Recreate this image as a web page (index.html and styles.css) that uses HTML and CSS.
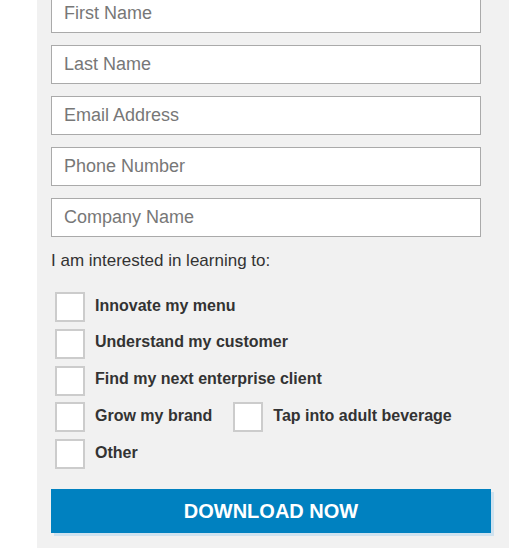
FILE: index.html
```html
<!DOCTYPE html>
<html>
<head>
<meta charset="utf-8">
<link rel="stylesheet" href="styles.css">
</head>
<body>
<div class="panel">
  <form class="form">
    <input class="field" type="text" placeholder="First Name">
    <input class="field" type="text" placeholder="Last Name">
    <input class="field" type="text" placeholder="Email Address">
    <input class="field" type="text" placeholder="Phone Number">
    <input class="field" type="text" placeholder="Company Name">
    <p class="intro">I am interested in learning to:</p>
    <div class="options">
      <div class="row"><label class="opt"><span class="box"></span><span class="opt-text">Innovate my menu</span></label></div>
      <div class="row"><label class="opt"><span class="box"></span><span class="opt-text">Understand my customer</span></label></div>
      <div class="row"><label class="opt"><span class="box"></span><span class="opt-text">Find my next enterprise client</span></label></div>
      <div class="row"><label class="opt"><span class="box"></span><span class="opt-text">Grow my brand</span></label><label class="opt"><span class="box"></span><span class="opt-text">Tap into adult beverage</span></label></div>
      <div class="row"><label class="opt"><span class="box"></span><span class="opt-text">Other</span></label></div>
    </div>
    <button class="submit" type="button">DOWNLOAD NOW</button>
  </form>
</div>
</body>
</html>
```
FILE: styles.css
```css
html, body {
  margin: 0;
  padding: 0;
  background: #ffffff;
  font-family: "Liberation Sans", Arial, sans-serif;
}
.panel {
  margin-left: 37px;
  margin-top: -6px;
  width: 472px;
  background: #f1f1f1;
  padding: 0 0 15px 14px;
  box-sizing: border-box;
}
.form {
  display: flex;
  flex-direction: column;
  margin: 0;
}
.field {
  display: block;
  width: 430px;
  height: 39px;
  box-sizing: border-box;
  border: 1px solid #aaaaaa;
  background: #ffffff;
  margin: 0 0 12px 0;
  padding: 0 12px;
  font-family: "Liberation Sans", Arial, sans-serif;
  font-size: 18px;
  color: #555;
  outline: none;
}
.field::placeholder {
  color: #777777;
  opacity: 1;
}
.intro {
  margin: 2px 0 0 0;
  font-size: 17px;
  line-height: 20px;
  color: #333333;
}
.options {
  display: flex;
  flex-direction: column;
  gap: 6.75px;
  margin: 21px 0 0 4px;
}
.row {
  display: flex;
  gap: 21px;
}
.opt {
  display: flex;
  align-items: center;
  gap: 10px;
}
.box {
  width: 30px;
  height: 30px;
  box-sizing: border-box;
  border: 2px solid #cccccc;
  background: #ffffff;
  flex: none;
}
.opt-text {
  font-weight: bold;
  font-size: 16px;
  color: #333333;
  margin-top: -3px;
}
.submit {
  margin-top: 20px;
  width: 440px;
  height: 44px;
  border: none;
  background: #0081c0;
  color: #ffffff;
  font-family: "Liberation Sans", Arial, sans-serif;
  font-weight: bold;
  font-size: 20px;
  box-shadow: 3px 3px 0 #cfe2ef;
  padding: 0;
}
```
